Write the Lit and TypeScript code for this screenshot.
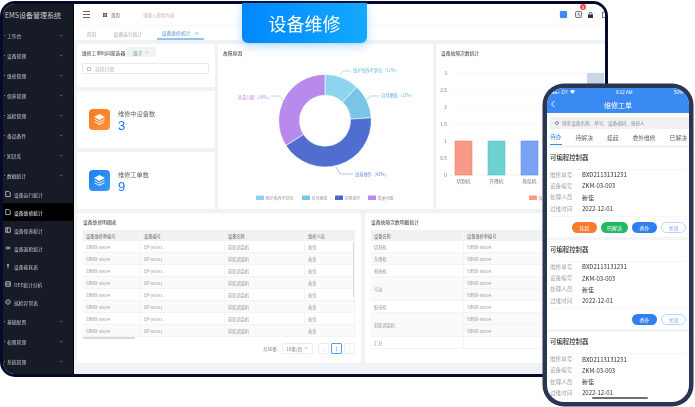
import { LitElement, html, css, svg } from "lit";
import { customElement } from "lit/decorators.js";

const polar = (cx: number, cy: number, r: number, pct: number) => {
  const a = (pct / 100) * Math.PI * 2 - Math.PI / 2;
  return [cx + r * Math.cos(a), cy + r * Math.sin(a)];
};
const slice = (from: number, to: number) => {
  const [cx, cy, R, r] = [325, 120.7, 46.3, 25.5];
  const large = to - from > 50 ? 1 : 0;
  const [x1, y1] = polar(cx, cy, R, from);
  const [x2, y2] = polar(cx, cy, R, to);
  const [x3, y3] = polar(cx, cy, r, to);
  const [x4, y4] = polar(cx, cy, r, from);
  return `M${x1} ${y1}A${R} ${R} 0 ${large} 1 ${x2} ${y2}L${x3} ${y3}A${r} ${r} 0 ${large} 0 ${x4} ${y4}Z`;
};

const chevron = (up = false) => html`<svg class="chev" viewBox="0 0 8 5"><path d=${up ? "M1 4l3-3 3 3" : "M1 1l3 3 3-3"} fill="none" stroke="currentColor" stroke-width="1"/></svg>`;
const stack = html`<svg viewBox="0 0 24 24" width="13" height="13"><path d="M12 2 22 7.5 12 13 2 7.5z" fill="#fff"/><path d="M3.5 11 2 12l10 5.5L22 12l-1.5-1L12 15.5z" fill="#fff" opacity=".9"/><path d="M3.5 15.5 2 16.5 12 22l10-5.5-1.5-1L12 20z" fill="#fff" opacity=".9"/></svg>`;

const sideItems: { t: string; k: "g" | "s" | "a" | "o"; icon?: string }[] = [
  { t: "工作台", k: "g" }, { t: "设备管理", k: "g" }, { t: "维修管理", k: "g" }, { t: "保养管理", k: "g" },
  { t: "巡检管理", k: "g" }, { t: "备品备件", k: "g" }, { t: "知识库", k: "g" }, { t: "数据统计", k: "o" },
  { t: "设备运行统计", k: "s", icon: "M1 .5h4l2 2v5H1z" }, { t: "设备维修统计", k: "a", icon: "M1 .5h4l2 2v5H1z" },
  { t: "设备保养统计", k: "s", icon: "M1 1h6v6H1zM3 1v6" }, { t: "设备巡检统计", k: "s", icon: "M1 3h6M1 5h6" },
  { t: "设备能耗表", k: "s", icon: "M4 1v4M2.5 2.5h3M4 5v2" }, { t: "OEE统计分析", k: "s", icon: "M1 1h6v6H1zM1 4h6" },
  { t: "巡检异常表", k: "s", icon: "M4 1a3 3 0 1 0 .01 0zM4 3v2" }, { t: "基础配置", k: "g" }, { t: "权限管理", k: "g" }, { t: "系统管理", k: "g" },
];

const barY = [[73, "3"], [90, "2.5"], [107, "2"], [124, "1.5"], [141, "1"], [158, "0.5"], [175, "0"]] as const;
const bars = [
  { x: 455, n: "切割机", f: "#f79a88", s: "#f0826e" },
  { x: 488, n: "升降机", f: "#6ed2d2", s: "#54c6c6" },
  { x: 521, n: "卷绕机", f: "#78a2f4", s: "#6690ec" },
];

const leftCols = ["设备维修单编号", "设备编号", "设备名称", "维修人员"];
const orders = [
  { title: "可编程控制器", acts: ["o", "g", "b", "c"] },
  { title: "可编程控制器", acts: ["b", "c"] },
  { title: "可编程控制器", acts: [] as string[] },
];
const actText: Record<string, string> = { o: "挂起", g: "已解决", b: "委外", c: "关闭" };

@customElement("app-root")
export class AppRoot extends LitElement {
  static styles = css`
    :host { display: block; width: 695px; height: 407px; background: #fff; overflow: hidden; font-family: "Noto Sans CJK SC", "Noto Sans", sans-serif; }
    .stage { position: relative; width: 695px; height: 407px; filter: blur(0.3px); }
    .frame { position: absolute; left: 0; top: 1px; width: 608px; height: 376px; box-sizing: border-box; border: 3px solid #040a2c; border-radius: 15px; background: #f0f2f6; overflow: hidden; display: flex; }
    .side { width: 70px; flex: none; background: #161b26; color: #c4c7cc; font-size: 4.8px; border-right: 1px solid #050505; }
    .brand { height: 21px; display: flex; align-items: center; padding-left: 2px; font-size: 7px; color: #c9ccd2; white-space: nowrap; }
    .si { display: flex; align-items: center; height: 20px; padding: 0 10px 0 3px; white-space: nowrap; }
    .si.sub, .si.cur { height: 18px; padding-left: 2px; gap: 3px; }
    .si.cur { background: #000; color: #f2f2f2; }
    .si .chev { margin-left: auto; width: 4px; height: 3px; color: #a0a4ab; }
    .si.g::before { content: ""; width: 1px; height: 1px; background: #888; margin-right: 2px; margin-left: -2px; }
    .si svg.ic { width: 6px; height: 6px; flex: none; }
    .main { flex: 1; min-width: 0; display: flex; flex-direction: column; }
    .head { height: 22px; background: #fff; display: flex; align-items: center; font-size: 4.5px; color: #555; flex: none; padding-left: 9px; border-bottom: 1px solid #f6f7f9; box-sizing: border-box; }
    .burger { width: 7px; height: 5px; border-top: 1px solid #666; border-bottom: 1px solid #666; position: relative; margin-right: 13px; }
    .burger::after { content: ""; position: absolute; left: 0; right: 0; top: 2px; height: 1px; background: #666; }
    .dots { width: 4px; height: 4px; margin-right: 4px; flex: none; }
    .home { margin-right: 23px; }
    .ph { color: #b3b6bb; }
    .icons { margin-left: auto; display: flex; align-items: center; position: relative; width: 45px; flex: none; }
    .icons svg { display: block; flex: none; }
    .ibox { width: 7px; height: 7px; background: #3d8bf0; border-radius: 1px; box-shadow: 0 0 0 1px #eef3fb; margin-right: 8px; flex: none; }
    .clock { margin-right: 6px; }
    .lock { margin-right: 9px; }
    .last { width: 6px; height: 6px; border: 1px solid #777; box-sizing: border-box; flex: none; }
    .badge { position: absolute; left: 20px; top: -7px; width: 6px; height: 6px; background: #f04a4a; border-radius: 3px; color: #fff; font-size: 4px; line-height: 6px; text-align: center; }
    .tabs { height: 14px; background: #fff; flex: none; display: flex; font-size: 4.8px; color: #a4a7ac; align-items: center; }
    .tab { height: 100%; display: flex; align-items: center; justify-content: center; box-sizing: border-box; }
    .tab.t1 { width: 27px; padding-left: 8px; }
    .tab.t2 { width: 46px; padding-left: 8px; }
    .spacer { width: 10px; }
    .tab.t3 { width: 47px; color: #4e94e6; border-bottom: 2px solid #92c2ee; gap: 4px; }
    .body { flex: 1; padding: 4px 0 11px 3px; display: flex; flex-direction: column; gap: 4px; min-height: 0; }
    .top { display: grid; grid-template-columns: 138px 215px 1fr; gap: 3px; height: 165px; flex: none; }
    .lc { display: grid; grid-template-rows: 43px 57px 57px; gap: 4px; }
    .card { background: #fff; border-radius: 1px; min-width: 0; overflow: hidden; }
    .ct { font-size: 4.8px; color: #333; height: 16px; padding-left: 5px; display: flex; align-items: center; white-space: nowrap; }
    .filter { padding: 3px 5px; }
    .frow { display: flex; align-items: center; font-size: 4.8px; color: #333; height: 10px; gap: 1px; }
    .sel { width: 30px; height: 10px; background: #f1f3f2; color: #5fae7c; border-radius: 1px; display: flex; align-items: center; justify-content: center; gap: 3px; }
    .sel .chev { width: 4px; height: 3px; }
    .date { margin-top: 6px; width: 127px; height: 11px; box-sizing: border-box; border: 1px solid #e8e9eb; border-radius: 1px; font-size: 4.8px; color: #b4b7bc; display: flex; align-items: center; padding-left: 4px; gap: 4px; }
    .cal { width: 4px; height: 4px; border: 1px solid #c4c6ca; box-sizing: border-box; }
    .stat { display: flex; align-items: center; padding-left: 12px; gap: 8px; }
    .si-box { width: 21px; height: 21px; border-radius: 4px; display: flex; align-items: center; justify-content: center; flex: none; }
    .orange { background: linear-gradient(135deg, #f97a1c, #ff8f3c); }
    .blue { background: linear-gradient(135deg, #1a7ff0, #3c9bf8); }
    .st { font-size: 6.2px; color: #666; line-height: 9px; white-space: nowrap; }
    .sv { font-family: "Liberation Sans", sans-serif; font-size: 13px; line-height: 15px; color: #1478e8; margin-bottom: -2px; }
    svg.chart { display: block; width: 100%; }
    svg text { font-family: "Noto Sans CJK SC", "Noto Sans", sans-serif; }
    .bottom { display: grid; grid-template-columns: 284px 1fr; gap: 4px; height: 150px; flex: none; }
    .tcard { padding: 0 6px; }
    .ct.b { padding-left: 0; height: 17px; }
    table { border-collapse: separate; border-spacing: 0; table-layout: fixed; width: 100%; font-size: 4.2px; color: #94979c; }
    th { background: #f0f1f3; font-weight: 400; color: #666; height: 11px; text-align: left; padding: 0 0 0 3px; white-space: nowrap; border-right: 1px solid #f6f6f7; box-sizing: border-box; }
    td { height: 12px; padding: 0 0 0 3px; border-bottom: 1px solid #f3f4f5; border-right: 1px solid #f3f4f5; white-space: nowrap; box-sizing: border-box; overflow: hidden; }
    tr.alt td { background: #fafafa; }
    .wrap { position: relative; }
    .hsb { height: 2px; width: 52px; background: #d9dadd; }
    .vsb { position: absolute; right: 1px; top: 12px; width: 1.5px; height: 55px; background: #d9dadd; }
    .pager { display: flex; align-items: center; justify-content: flex-end; gap: 2px; font-size: 4.5px; color: #777; margin-top: 4px; }
    .pager .lab { margin-right: 3px; }
    .psel { width: 31px; height: 11px; box-sizing: border-box; border: 1px solid #eceded; border-radius: 1px; display: flex; align-items: center; justify-content: center; gap: 2px; margin-right: 3px; }
    .psel .chev { width: 4px; height: 2.5px; }
    .pb { width: 11px; height: 11px; box-sizing: border-box; border: 1px solid #eceded; border-radius: 1px; display: flex; align-items: center; justify-content: center; color: #b4b6ba; }
    .pb.on { border-color: #4f9ff0; color: #3a8dea; }
    .banner { position: absolute; left: 242px; top: 3px; width: 125px; height: 40px; box-sizing: border-box; border-radius: 0 0 6px 6px; background: linear-gradient(90deg, #0087ff, #14a9ff); box-shadow: 0 3px 10px rgba(40,150,255,.35); color: #fff; font-size: 18px; display: flex; align-items: center; justify-content: center; }
    .phone { position: absolute; left: 543px; top: 84px; width: 150px; height: 322px; box-sizing: border-box; border: 4px solid #2a3752; border-radius: 21px; background: #fff; overflow: hidden; display: flex; flex-direction: column; box-shadow: 0 0 0 .5px #2a3752; }
    .phead { background: #3a8af3; color: #fff; flex: none; height: 25px; }
    .status { height: 8px; display: flex; align-items: center; justify-content: space-between; font-size: 4.5px; padding: 0 6px 0 5px; font-family: "Liberation Sans", sans-serif; }
    .sig { display: flex; align-items: center; gap: 2px; }
    .ptitle { height: 17px; display: flex; align-items: center; justify-content: center; font-size: 7px; position: relative; }
    .back { position: absolute; left: 2px; top: 4px; width: 8px; height: 8px; }
    .psearch { margin: 4px 0 0 3px; width: 139px; height: 12px; box-sizing: border-box; background: #f1f1f2; display: flex; align-items: center; padding-left: 5px; gap: 3px; font-size: 4.6px; color: #8d8f93; white-space: nowrap; flex: none; }
    .mag { width: 4px; height: 4px; border: 1px solid #888; border-radius: 50%; box-sizing: border-box; }
    .ptabs { display: flex; justify-content: space-between; flex: none; padding: 0 2px 0 3px; height: 16px; font-size: 5.8px; color: #666; white-space: nowrap; }
    .ptab { height: 100%; display: flex; align-items: center; box-sizing: border-box; }
    .ptab.on { color: #3a8af3; border-bottom: 1px solid #3a8af3; }
    .order { border-top: 3px solid #f4f5f7; padding: 0 3px; flex: none; }
    .otitle { font-size: 6.4px; font-weight: 500; color: #333; height: 18px; padding-bottom: 3px; display: flex; align-items: center; border-bottom: 1px solid #f6f6f7; box-sizing: content-box; margin-bottom: -1px; }
    .orow { display: flex; font-size: 5.6px; height: 11.3px; align-items: center; color: #333; }
    .orow span:first-child { width: 32px; color: #a2a4a8; }
    .orow span:last-child { font-size: 6px; }
    .acts { display: flex; justify-content: flex-end; gap: 4px; height: 21px; align-items: center; margin-top: 2px; border-top: 1px solid #f6f6f7; box-sizing: border-box; }
    .btn { width: 25px; height: 11px; border-radius: 6px; color: #fff; font-size: 5px; display: flex; align-items: center; justify-content: center; }
    .btn.g { width: 27px; background: #25b864; }
    .btn.o { background: #f97a2e; }
    .btn.b { background: #2f7ff0; }
    .btn.c { background: #fff; color: #7aa8ee; border: 1px solid #bcd4f7; box-sizing: border-box; }
    .homebar { position: absolute; left: 45px; bottom: 3px; width: 56px; height: 2px; background: #6f7074; border-radius: 1px; }
  `;

  private side() {
    return sideItems.map((i) => {
      if (i.k === "s" || i.k === "a")
        return html`<div class="si ${i.k === "a" ? "cur" : "sub"}"><svg class="ic" viewBox="0 0 8 8"><path d=${i.icon!} fill="none" stroke="#dfe1e4" stroke-width="1"/></svg>${i.t}</div>`;
      return html`<div class="si g">${i.t}${chevron(i.k === "o")}</div>`;
    });
  }

  private pie() {
    const labels = [
      { t: "维护保养不到位（12%）", x: 353, y: 72, c: "#6bbcdf", l: "M340 75 343 71H351" },
      { t: "自然磨损（12%）", x: 381, y: 97, c: "#62b3da", l: "M367 100 370 96H379" },
      { t: "违章操作（42%）", x: 355, y: 175.5, c: "#6a84da", l: "M336 167 340 174H353" },
      { t: "质量问题（34%）", x: 238, y: 98.5, c: "#bd93ec", l: "M284 101 279 96H271" },
    ];
    const leg = [
      { x: 256, c: "#8ed3f0", t: "维护保养不到位" },
      { x: 302, c: "#78c5e6", t: "自然磨损" },
      { x: 335, c: "#4a69cc", t: "违章操作" },
      { x: 368, c: "#b78aeb", t: "质量问题" },
    ];
    return html`<svg class="chart" viewBox="218 60 215 149" height="149">
      ${[[0, 12, "#8ed3f0"], [12, 24, "#78c5e6"], [24, 66, "#4f6ecf"], [66, 100, "#b78aeb"]].map(
        ([a, b, c]) => svg`<path d=${slice(a as number, b as number)} fill=${c as string} stroke="#fff" stroke-width=".6"/>`
      )}
      ${labels.map((l) => svg`<path d=${l.l} fill="none" stroke=${l.c} stroke-width=".5"/><text x=${l.x} y=${l.y} font-size="4.2" fill=${l.c}>${l.t}</text>`)}
      ${leg.map((l) => svg`<rect x=${l.x} y="195.5" width="8" height="4.5" rx=".5" fill=${l.c}/><text x=${l.x + 9.5} y="199.6" font-size="4" fill="#9a9ca1">${l.t}</text>`)}
    </svg>`;
  }

  private bar() {
    return html`<svg class="chart" viewBox="436 60 169 149" height="149">
      ${barY.map(([y, t]) => svg`<line x1="450" x2="605" y1=${y} y2=${y} stroke=${t === "0" ? "#e3e5e8" : "#f4f5f6"} stroke-width=".6"/><text x="447" y=${y + 1.7} text-anchor="end" font-size="4.8" fill="#777">${t}</text>`)}
      ${bars.map((b) => svg`<rect x=${b.x} y="141" width="17" height="34" fill=${b.f} stroke=${b.s} stroke-width=".6"/><text x=${b.x + 8.5} y="182.7" text-anchor="middle" font-size="4.6" fill="#777">${b.n}</text>`)}
      <rect x="587" y="73" width="17" height="102" fill="#c9d6e3"/>
      <rect x="529" y="195.5" width="8" height="4.5" fill="#f79a88"/>
      <text x="538.5" y="199.6" font-size="4" fill="#9a9ca1">故</text>
    </svg>`;
  }

  private leftTable() {
    return html`<div class="wrap"><table>
      <colgroup><col style="width:58px"/><col style="width:84px"/><col style="width:80px"/><col style="width:50px"/></colgroup>
      <thead><tr>${leftCols.map((c) => html`<th>${c}</th>`)}</tr></thead>
      <tbody>${Array.from({ length: 8 }, (_, i) => html`<tr class=${i % 2 ? "alt" : ""}><td>SBWX-00009</td><td>DP-00001</td><td>前胶调温机</td><td>乘优</td></tr>`)}</tbody>
    </table><div class="vsb"></div><div class="hsb"></div></div>`;
  }

  private rightTable() {
    const sn = html`<td>SBWX-00009</td>`;
    return html`<table>
      <colgroup><col style="width:93px"/><col/></colgroup>
      <thead><tr><th>设备名称</th><th>设备维修单编号</th></tr></thead>
      <tbody>
        <tr><td>切割机</td>${sn}</tr>
        <tr class="alt"><td>升降机</td>${sn}</tr>
        <tr><td>卷绕机</td>${sn}</tr>
        <tr class="alt"><td rowspan="2">马达</td>${sn}</tr>
        <tr class="alt">${sn}</tr>
        <tr><td>配电柜</td>${sn}</tr>
        <tr class="alt"><td rowspan="2">前胶调温机</td>${sn}</tr>
        <tr class="alt">${sn}</tr>
        <tr><td>汇总</td><td></td></tr>
      </tbody>
    </table>`;
  }

  private order(o: { title: string; acts: string[] }) {
    const rows = [["维修单号", "BXD2113131231"], ["设备编号", "ZKM-03-003"], ["处理人员", "新佳"], ["过维时间", "2022-12-01"]];
    return html`<div class="order">
      <div class="otitle">${o.title}</div>
      ${rows.map(([a, b]) => html`<div class="orow"><span>${a}</span><span>${b}</span></div>`)}
      ${o.acts.length ? html`<div class="acts">${o.acts.map((a) => html`<div class="btn ${a}">${actText[a]}</div>`)}</div>` : ""}
    </div>`;
  }

  render() {
    return html`<div class="stage">
      <div class="frame">
        <aside class="side"><div class="brand">EMS设备管理系统</div>${this.side()}</aside>
        <div class="main">
          <div class="head">
            <div class="burger"></div>
            <svg class="dots" viewBox="0 0 4 4"><path d="M0 0h1.7v1.7H0zM2.3 0H4v1.7H2.3zM0 2.3h1.7V4H0zM2.3 2.3H4V4H2.3z" fill="#444"/></svg>
            <span class="home">首页</span><span class="ph">请输入搜索内容</span>
            <div class="icons">
              <div class="ibox"></div>
              <svg class="clock" width="7" height="7" viewBox="0 0 7 7"><rect x=".5" y=".5" width="6" height="6" rx="1" fill="#e4e6e9" stroke="#555" stroke-width=".8"/><path d="M3.5 2v1.7L5 4.5" fill="none" stroke="#555" stroke-width=".7"/></svg>
              <svg class="lock" width="5" height="6" viewBox="0 0 5 6"><path d="M1 3V1.8a1.5 1.5 0 0 1 3 0V3" fill="none" stroke="#333" stroke-width=".8"/><rect y="2.6" width="5" height="3.4" rx=".5" fill="#333"/></svg>
              <div class="last"></div>
              <div class="badge">8</div>
            </div>
          </div>
          <div class="tabs">
            <div class="tab t1">首页</div><div class="tab t2">设备运行统计</div><div class="spacer"></div>
            <div class="tab t3">设备维修统计<span>×</span></div>
          </div>
          <div class="body">
            <div class="top">
              <div class="lc">
                <div class="card filter">
                  <div class="frow">维修工单时间筛选器<div class="sel">维手${chevron()}</div></div>
                  <div class="date"><div class="cal"></div>选择日期</div>
                </div>
                <div class="card stat"><div class="si-box orange">${stack}</div><div><div class="st">维修中设备数</div><div class="sv">3</div></div></div>
                <div class="card stat"><div class="si-box blue">${stack}</div><div><div class="st">维修工单数</div><div class="sv">9</div></div></div>
              </div>
              <div class="card"><div class="ct">故障原因</div>${this.pie()}</div>
              <div class="card"><div class="ct">设备故障次数统计</div>${this.bar()}</div>
            </div>
            <div class="bottom">
              <div class="card tcard">
                <div class="ct b">设备维修明细表</div>
                ${this.leftTable()}
                <div class="pager"><span class="lab">共50条</span><div class="psel">10条/页${chevron(true)}</div><div class="pb">‹</div><div class="pb on">1</div><div class="pb">›</div></div>
              </div>
              <div class="card tcard">
                <div class="ct b">设备故障次数明细统计</div>
                ${this.rightTable()}
              </div>
            </div>
          </div>
        </div>
      </div>
      <div class="banner">设备维修</div>
      <div class="phone">
        <div class="phead">
          <div class="status"><span class="sig">●●○ DY<svg width="5" height="4" viewBox="0 0 5 4"><path d="M0 1a3.5 3.5 0 0 1 5 0L2.5 4z" fill="#fff"/></svg></span><span>9:12 AM</span><span>50%</span></div>
          <div class="ptitle"><svg class="back" viewBox="0 0 8 8"><path d="M5.5 1 2.5 4l3 3" fill="none" stroke="#fff" stroke-width="1"/></svg>维修工单</div>
        </div>
        <div class="psearch"><div class="mag"></div>搜索设备名称、单号、设备编码、报修人</div>
        <div class="ptabs"><div class="ptab on">待办</div><div class="ptab">待解决</div><div class="ptab">挂起</div><div class="ptab">委外维修</div><div class="ptab">已解决</div></div>
        ${orders.map((o) => this.order(o))}
        <div class="homebar"></div>
      </div>
    </div>`;
  }
}
